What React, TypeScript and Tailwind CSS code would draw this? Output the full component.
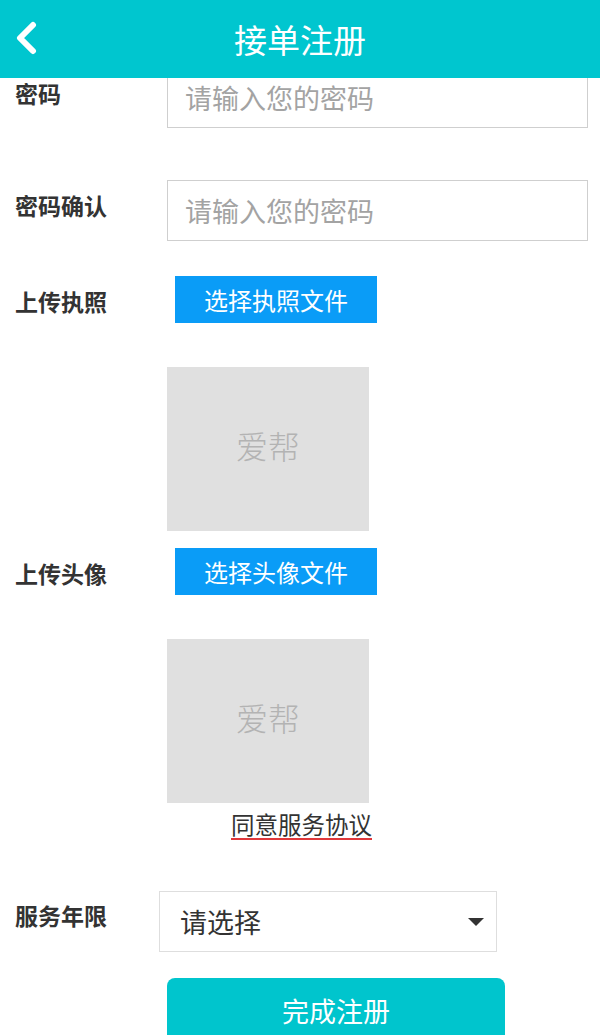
import React from 'react';

const font = { fontFamily: '"Noto Sans CJK SC", "Noto Sans", sans-serif' };

function Label({ children, className = '' }: { children: React.ReactNode; className?: string }) {
  return (
    <div className={`w-[167px] shrink-0 pl-[15px] text-[23px] font-bold leading-none text-[#333] ${className}`}>
      {children}
    </div>
  );
}

function TextInput({ placeholder }: { placeholder: string }) {
  return (
    <div className="flex h-[61px] w-[421px] items-center border border-[#cfcfcf] bg-white pl-[17px]">
      <span className="text-[27px] leading-none text-[#a3a3a3]">{placeholder}</span>
    </div>
  );
}

function FileButton({ text }: { text: string }) {
  return (
    <div className="ml-[8px] flex h-[47px] w-[202px] items-center justify-center bg-[#0a9cf7] text-[24px] leading-none text-white">
      {text}
    </div>
  );
}

function Preview() {
  return (
    <div className="ml-[167px] flex h-[164px] w-[202px] items-center justify-center bg-[#e0e0e0]">
      <span className="-mt-[8px] text-[32px] font-light leading-none text-[#b3b3b3]">爱帮</span>
    </div>
  );
}

export default function App() {
  return (
    <div className="flex h-[1035px] w-[600px] flex-col overflow-hidden bg-white" style={font}>
      <header className="relative z-10 flex h-[78px] shrink-0 items-center justify-center bg-[#00c6cf]">
        <svg className="absolute left-[13px] top-[21px]" width="28" height="34" viewBox="0 0 28 34">
          <path d="M20 4 L7 17 L20 30" fill="none" stroke="white" strokeWidth="6" strokeLinecap="round" strokeLinejoin="round" />
        </svg>
        <h1 className="text-[33px] leading-none text-white">接单注册</h1>
      </header>

      <main className="flex flex-col">
        <div className="-mt-[11px] flex items-center">
          <Label className="-mt-[8px]">密码</Label>
          <TextInput placeholder="请输入您的密码" />
        </div>

        <div className="mt-[52px] flex items-center">
          <Label className="-mt-[10px]">密码确认</Label>
          <TextInput placeholder="请输入您的密码" />
        </div>

        <div className="mt-[35px] flex items-center">
          <Label className="mt-[3px]">上传执照</Label>
          <FileButton text="选择执照文件" />
        </div>

        <div className="mt-[44px]">
          <Preview />
        </div>

        <div className="mt-[17px] flex items-center">
          <Label className="mt-[3px]">上传头像</Label>
          <FileButton text="选择头像文件" />
        </div>

        <div className="mt-[44px]">
          <Preview />
        </div>

        <div className="mt-[8px] pl-[231px]">
          <span className="inline-block border-b-2 border-[#e0383b] pb-[1px] text-[23.5px] leading-[26px] text-[#333]">
            同意服务协议
          </span>
        </div>

        <div className="mt-[51px] flex items-center">
          <Label className="-mt-[12px]">服务年限</Label>
          <div className="-ml-[8px] flex h-[61px] w-[338px] items-center justify-between border border-[#dedede] bg-white pl-[20px] pr-[12px]">
            <span className="text-[27px] leading-none text-[#333]">请选择</span>
            <svg width="16" height="10" viewBox="0 0 16 10">
              <path d="M0 1 L16 1 L8 9 Z" fill="#333" />
            </svg>
          </div>
        </div>

        <div className="mt-[26px] pl-[167px]">
          <div className="flex h-[64px] w-[338px] items-center justify-center rounded-[8px] bg-[#00c5cd] text-[27px] leading-none text-white">
            完成注册
          </div>
        </div>
      </main>
    </div>
  );
}
